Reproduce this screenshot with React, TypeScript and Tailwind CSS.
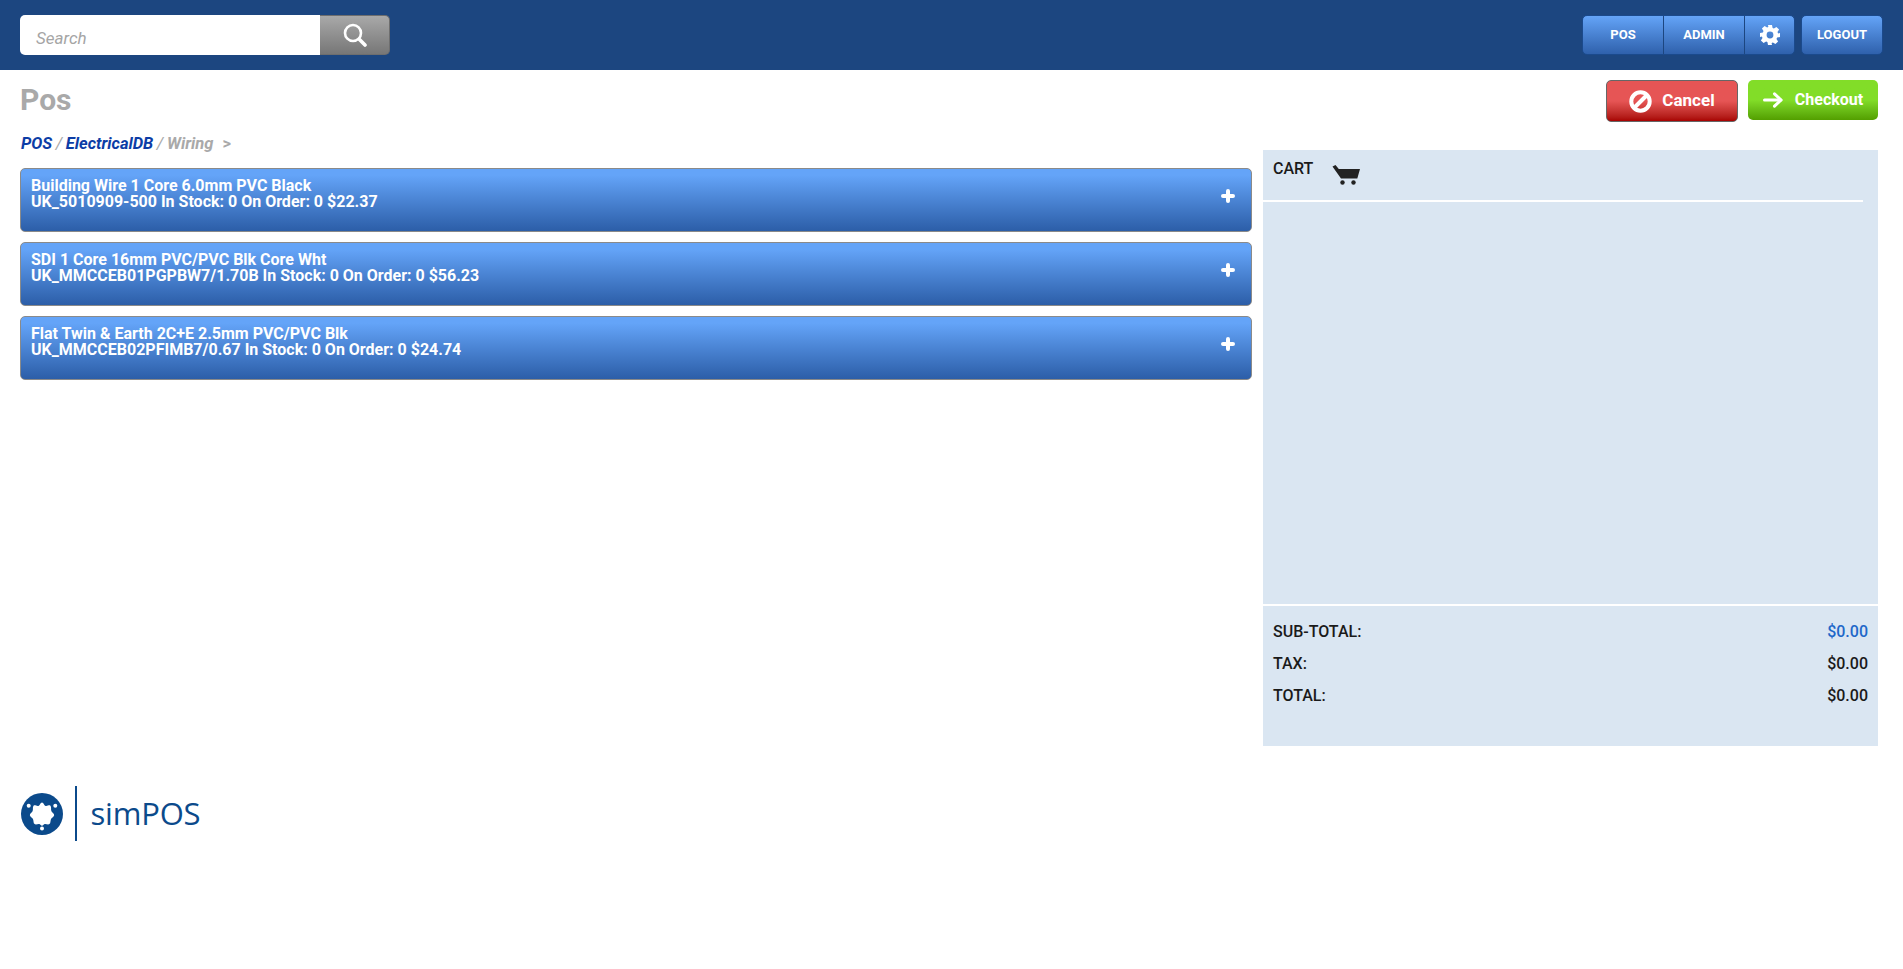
import React from "react";

const items = [
  ["Building Wire 1 Core 6.0mm PVC Black", "UK_5010909-500 In Stock: 0 On Order: 0 $22.37"],
  ["SDI 1 Core 16mm PVC/PVC Blk Core Wht", "UK_MMCCEB01PGPBW7/1.70B In Stock: 0 On Order: 0 $56.23"],
  ["Flat Twin & Earth 2C+E 2.5mm PVC/PVC Blk", "UK_MMCCEB02PFIMB7/0.67 In Stock: 0 On Order: 0 $24.74"],
];

function Cart() {
  return (
    <svg width="28" height="20" viewBox="0 0 28 20" fill="#222">
      <path d="M0.5 1.5 L3.5 0 L6.8 4 L28 4 L25.3 13.5 L9 13.5 Z" />
      <circle cx="10.5" cy="17.5" r="2.2" />
      <circle cx="21.5" cy="17.5" r="2.2" />
    </svg>
  );
}

function SearchIcon() {
  return (
    <svg width="24" height="24" viewBox="0 0 24 24" fill="none" stroke="#fff" strokeLinecap="round">
      <circle cx="10" cy="10" r="8" strokeWidth="2.6" />
      <path d="M16.5 16.5 L22 22" strokeWidth="3.6" />
    </svg>
  );
}

function Gear() {
  return (
    <svg width="20" height="20" viewBox="0 0 20 20" fill="#fff">
      <path
        fillRule="evenodd"
        d="M8 0h4l.6 2.9 1.3.6 2.5-1.6 2.7 2.7-1.6 2.5.6 1.3L20 8v4l-2.9.6-.6 1.3 1.6 2.5-2.7 2.7-2.5-1.6-1.3.6L12 20H8l-.6-2.9-1.3-.6-2.5 1.6-2.7-2.7 1.6-2.5-.6-1.3L0 12V8l2.9-.6.6-1.3L1.9 3.6l2.7-2.7 2.5 1.6 1.3-.6L8 0Z M10 6.6a3.4 3.4 0 1 0 0 6.8 3.4 3.4 0 0 0 0-6.8Z"
      />
    </svg>
  );
}

function Ban() {
  return (
    <svg width="23" height="23" viewBox="0 0 23 23" fill="none" stroke="#fff">
      <circle cx="11.5" cy="11.5" r="9.2" strokeWidth="4" />
      <path d="M5 18 L18 5" strokeWidth="4" />
    </svg>
  );
}

function Arrow() {
  return (
    <svg width="20" height="16" viewBox="0 0 20 16" fill="none" stroke="#fff" strokeLinecap="round" strokeLinejoin="round">
      <path d="M1.5 8 H18" strokeWidth="3" />
      <path d="M11.5 1.8 L18 8 L11.5 14.2" strokeWidth="3" />
    </svg>
  );
}

function PlusIcon() {
  return (
    <svg width="14" height="14" viewBox="0 0 14 14" fill="none" stroke="#fff" strokeWidth="4" strokeLinecap="round">
      <path d="M7 2 V12 M2 7 H12" />
    </svg>
  );
}

function Logo() {
  return (
    <svg width="42" height="42" viewBox="0 0 42 42">
      <circle cx="21" cy="21" r="21" fill="#0b4a8b" />
      <path
        fill="#fff"
        transform="translate(21 21) scale(0.82 0.92) translate(-21 -20.5)"
        d="M21 8 C23 8 23.5 11.2 25.5 11.8 C27.5 12.3 29.8 10.2 31.3 11.6 C32.8 13 31.5 15.6 32.5 17.4 C33.5 19.2 36 19.8 35.8 21.8 C35.6 23.8 33 24 32 25.8 C31 27.6 31.8 30.4 30 31.5 C28.2 32.6 26 31 24.2 31.5 C22.6 32 22.6 33.2 21 33.2 C19.4 33.2 19.4 32 17.8 31.5 C16 31 13.8 32.6 12 31.5 C10.2 30.4 11 27.6 10 25.8 C9 24 6.4 23.8 6.2 21.8 C6 19.8 8.5 19.2 9.5 17.4 C10.5 15.6 9.2 13 10.7 11.6 C12.2 10.2 14.5 12.3 16.5 11.8 C18.5 11.2 19 8 21 8 Z"
      />
      <circle cx="21" cy="35.5" r="2" fill="#fff" />
      <circle cx="7.7" cy="12.8" r="2" fill="#fff" />
      <circle cx="34.3" cy="12.8" r="2" fill="#fff" />
    </svg>
  );
}

export default function App() {
  return (
    <div className="min-h-[969px] bg-white font-['Roboto',sans-serif]">
      <header className="flex h-[70px] items-center justify-between bg-[#1c4680] pl-5 pr-5">
        <div className="flex h-10 w-[370px]">
          <div className="flex h-10 w-[300px] items-center rounded-l-[5px] bg-white pl-4 pt-[7px] text-[17px] italic text-[#a5a5a5]">
            Search
          </div>
          <button className="flex h-10 w-[70px] items-center justify-center rounded-r-[5px] border border-[#6e6e6e] border-l-0 bg-gradient-to-b from-[#a9a9a9] to-[#777777]">
            <SearchIcon />
          </button>
        </div>
        <div className="flex gap-[6px]">
          <div className="flex h-10 w-[213px] overflow-hidden rounded-[5px] border border-[#1b4a8c] bg-gradient-to-b from-[#64a4f8] to-[#2f61ac] text-[13px] font-bold text-white">
            <div className="flex w-[81px] items-center justify-center border-r border-[#1c4680]">POS</div>
            <div className="flex w-[81px] items-center justify-center border-r border-[#1c4680]">ADMIN</div>
            <div className="flex flex-1 items-center justify-center">
              <Gear />
            </div>
          </div>
          <div className="flex h-10 w-[82px] items-center justify-center rounded-[5px] border border-[#1b4a8c] bg-gradient-to-b from-[#64a4f8] to-[#2f61ac] text-[13px] font-bold text-white">
            LOGOUT
          </div>
        </div>
      </header>

      <div className="flex items-start justify-between pl-5 pr-[25px] pt-[10px]">
        <h1 className="text-[30px] font-bold leading-[39px] text-[#a9a9a9]">Pos</h1>
        <div className="flex items-start gap-[10px]">
          <button className="flex h-[42px] w-[132px] items-center justify-center gap-[10px] rounded-[5px] border border-[#666666] bg-gradient-to-b from-[#e65555] from-50% to-[#a80000] text-[17px] font-bold text-white">
            <Ban />
            Cancel
          </button>
          <button className="flex h-10 w-[130px] items-center justify-center gap-[12px] rounded-[5px] bg-gradient-to-b from-[#82dd28] from-50% to-[#539f00] text-[16px] font-bold text-white">
            <Arrow />
            <span className="-mt-[1px]">Checkout</span>
          </button>
        </div>
      </div>

      <div className="flex gap-[11px] pl-5 pr-[25px] pt-2">
        <div className="w-[1232px]">
          <div className="flex h-[38px] items-start pt-[2px] text-[16.5px] font-bold italic leading-6 text-[#a9a9a9]">
            <span className="pl-[1px] text-[#0c3da6]">POS</span>
            <span className="px-[3.5px] font-normal">/</span>
            <span className="text-[#0c3da6]">ElectricalDB</span>
            <span className="px-[3.5px] font-normal">/</span>
            <span>Wiring</span>
            <span className="pl-[9px] not-italic">&gt;</span>
          </div>
          <div className="flex flex-col gap-[10px]">
            {items.map((it) => (
              <div
                key={it[0]}
                className="flex h-16 items-start justify-between rounded-[5px] border border-[#8a8a8a] bg-gradient-to-b from-[#64a4f8] from-10% to-[#2c5ea8] pl-[10px] pr-[16px] pt-[9px] text-[16px] font-bold leading-4 text-white"
              >
                <div>
                  <div>{it[0]}</div>
                  <div>{it[1]}</div>
                </div>
                <span className="mt-[11px]">
                  <PlusIcon />
                </span>
              </div>
            ))}
          </div>
        </div>
        <div className="mt-[20px] h-[596px] w-[615px] bg-[#dae6f2] text-[16px] font-medium text-[#1a1a1a]">
          <div className="flex h-[52px] w-[600px] items-start gap-[19px] border-b-2 border-white pl-[10px] pt-[9px]">
            <span className="leading-5">CART</span>
            <span className="mt-[6px]">
              <Cart />
            </span>
          </div>
          <div className="h-[404px] border-b-2 border-white" />
          <div className="flex flex-col gap-[12px] pl-[10px] pr-[10px] pt-[16px]">
            <div className="flex h-5 items-center justify-between">
              <span>SUB-TOTAL:</span>
              <span className="text-[#1f68c9]">$0.00</span>
            </div>
            <div className="flex h-5 items-center justify-between">
              <span>TAX:</span>
              <span>$0.00</span>
            </div>
            <div className="flex h-5 items-center justify-between">
              <span>TOTAL:</span>
              <span>$0.00</span>
            </div>
          </div>
        </div>
      </div>

      <footer className="flex items-center pl-[20.5px] pt-[40px]">
        <Logo />
        <div className="ml-[12px] h-[55px] w-[2px] bg-[#0b4a8b]" />
        <span className="ml-[14px] font-['Open_Sans',sans-serif] text-[31px] leading-none tracking-[-0.2px] text-[#0b4a8b]">
          simPOS
        </span>
      </footer>
    </div>
  );
}
